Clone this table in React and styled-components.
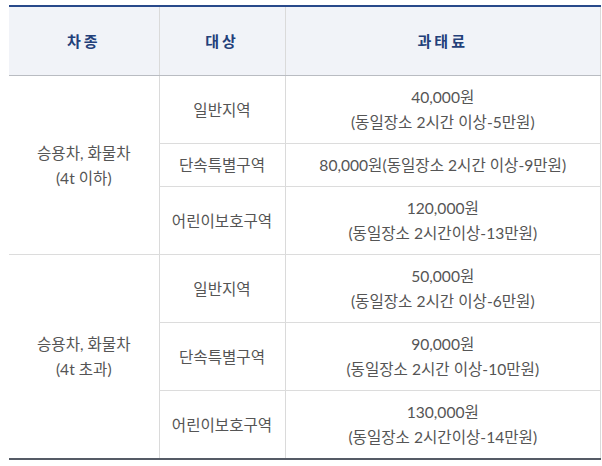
import React from "react";
import styled, {createGlobalStyle} from "styled-components";

const GlobalStyle = createGlobalStyle`
    body {
        margin: 0;
        padding: 5px 0 0 9px;
        background: #fff;
        font-family: Lato, "Noto Sans CJK KR", "Noto Sans", sans-serif;
    }
`

const FineTable = styled.table`
    width: 592px;
    border-collapse: collapse;
    table-layout: fixed;
    border-top: 2px solid #28498a;
    border-bottom: 2px solid #555b66;
    color: #555;
    font-size: 15.6px;
    line-height: 25px;
`

const HeadCell = styled.th`
    background: #f1f3f8;
    color: #23407a;
    font-weight: 700;
    font-size: 15px;
    letter-spacing: 3px;
    padding: 22px 0 21px;
    border-bottom: 1px solid #b9bcc2;
    border-left: ${p => p.$first ? "none" : "1px solid #dadada"};
    border-right: ${p => p.$last ? "1px solid #dadada" : "none"};
    text-align: center;
`

const Cell = styled.td`
    padding: 9px 4px 8px;
    text-align: center;
    vertical-align: middle;
    border-bottom: 1px solid #dcdcdc;
    border-left: ${p => p.$first ? "none" : "1px solid #dadada"};
    border-right: ${p => p.$last ? "1px solid #dadada" : "none"};
    font-weight: 400;
`

const groups = [
    {
        car: ["승용차, 화물차", "(4t 이하)"],
        rows: [
            {area: "일반지역", fine: ["40,000원", "(동일장소 2시간 이상-5만원)"]},
            {area: "단속특별구역", fine: ["80,000원(동일장소 2시간 이상-9만원)"]},
            {area: "어린이보호구역", fine: ["120,000원", "(동일장소 2시간이상-13만원)"]},
        ],
    },
    {
        car: ["승용차, 화물차", "(4t 초과)"],
        rows: [
            {area: "일반지역", fine: ["50,000원", "(동일장소 2시간 이상-6만원)"]},
            {area: "단속특별구역", fine: ["90,000원", "(동일장소 2시간 이상-10만원)"]},
            {area: "어린이보호구역", fine: ["130,000원", "(동일장소 2시간이상-14만원)"]},
        ],
    },
]

const Lines = ({lines}) => lines.map((l, i) => (
    <React.Fragment key={i}>
        {i > 0 && <br/>}
        {l}
    </React.Fragment>
))

export default function App() {
    return (
        <>
            <GlobalStyle/>
            <FineTable>
                <colgroup>
                    <col style={{width: 150}}/>
                    <col style={{width: 126}}/>
                    <col/>
                </colgroup>
                <thead>
                    <tr>
                        <HeadCell $first>차종</HeadCell>
                        <HeadCell>대상</HeadCell>
                        <HeadCell $last>과태료</HeadCell>
                    </tr>
                </thead>
                <tbody>
                    {groups.map((g, gi) => g.rows.map((r, ri) => (
                        <tr key={`${gi}-${ri}`}>
                            {ri === 0 && (
                                <Cell $first rowSpan={g.rows.length}>
                                    <Lines lines={g.car}/>
                                </Cell>
                            )}
                            <Cell>{r.area}</Cell>
                            <Cell $last><Lines lines={r.fine}/></Cell>
                        </tr>
                    )))}
                </tbody>
            </FineTable>
        </>
    );
}
